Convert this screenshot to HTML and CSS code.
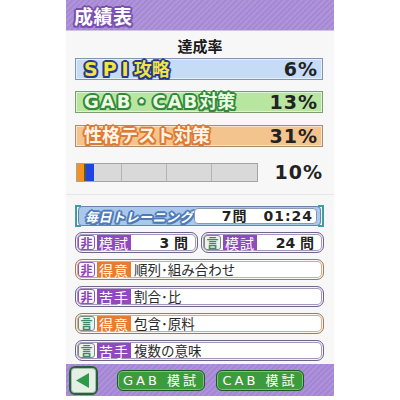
FILE: index.html
```html
<!DOCTYPE html>
<html lang="ja">
<head>
<meta charset="utf-8">
<title>成績表</title>
<link rel="stylesheet" href="styles.css">
</head>
<body>
<div class="screen">
  <header class="hdr"><span class="hdr-title ol">成績表</span></header>

  <section class="top">
    <div class="title">達成率</div>
    <div class="rate rate-spi">
      <span class="rate-name ol"><span class="latin latin-wide">SPI</span>攻略</span>
      <span class="pct">6%</span>
    </div>
    <div class="rate rate-gab">
      <span class="rate-name ol"><span class="latin">GAB・CAB</span>対策</span>
      <span class="pct">13%</span>
    </div>
    <div class="rate rate-sei">
      <span class="rate-name ol">性格テスト対策</span>
      <span class="pct">31%</span>
    </div>
    <div class="prog-row">
      <div class="prog">
        <div class="seg seg-first">
          <span class="f-or" style="width:7px"></span><span class="f-ol" style="width:2px"></span><span class="f-bl" style="width:8px"></span>
        </div>
        <div class="seg"></div>
        <div class="seg"></div>
        <div class="seg"></div>
      </div>
      <span class="prog-pct">10%</span>
    </div>
  </section>

  <section class="lower">
    <div class="daily">
      <div class="daily-in">
        <span class="daily-label ol">毎日トレーニング</span>
        <span class="daily-val"><span class="dv-q">7問</span><span class="dv-t">01:24</span></span>
      </div>
    </div>

    <div class="mock-row">
      <div class="pill pill-purple">
        <span class="badge badge-hi">非</span><span class="tag tag-purple">模試</span><span class="num">3 問</span>
      </div>
      <div class="pill pill-purple">
        <span class="badge badge-gen">言</span><span class="tag tag-purple">模試</span><span class="num">24 問</span>
      </div>
    </div>

    <div class="pill pill-orange">
      <span class="badge badge-hi">非</span><span class="tag tag-orange">得意</span><span class="val">順列･組み合わせ</span>
    </div>
    <div class="pill pill-purple">
      <span class="badge badge-hi">非</span><span class="tag tag-purple">苦手</span><span class="val">割合･比</span>
    </div>
    <div class="pill pill-orange">
      <span class="badge badge-gen">言</span><span class="tag tag-orange">得意</span><span class="val">包含･原料</span>
    </div>
    <div class="pill pill-purple">
      <span class="badge badge-gen">言</span><span class="tag tag-purple">苦手</span><span class="val">複数の意味</span>
    </div>
  </section>

  <footer class="bar">
    <div class="back">
      <svg width="15" height="17" viewBox="0 0 15 17"><path d="M14 1 L1 8.5 L14 16 Z" fill="#2f9a4c"/></svg>
    </div>
    <div class="btn">GAB 模試</div>
    <div class="btn">CAB 模試</div>
  </footer>
</div>
</body>
</html>
```

FILE: styles.css
```css
html, body {
  margin: 0;
  padding: 0;
  background: #ffffff;
}

body {
  font-family: "Noto Sans CJK JP", "Noto Sans", sans-serif;
  color: #222;
}

.screen {
  width: 268px;
  height: 396px;
  margin-left: 66px;
  background: #f7f7f7;
  display: flex;
  flex-direction: column;
  overflow: hidden;
}

.ol {
  text-shadow:
    -2px 0 var(--oc), 2px 0 var(--oc), 0 -2px var(--oc), 0 2px var(--oc),
    -1.5px -1.5px var(--oc), 1.5px -1.5px var(--oc), -1.5px 1.5px var(--oc), 1.5px 1.5px var(--oc);
}

/* header */
.hdr {
  height: 31px;
  box-sizing: border-box;
  background: repeating-linear-gradient(135deg, #a689d4 0 2px, #af94da 2px 4px);
  border-bottom: 1px solid #cfc6d8;
  display: flex;
  align-items: center;
  padding-left: 8px;
}
.hdr-title {
  --oc: #7a4fb0;
  color: #ffffff;
  font-size: 19px;
  font-weight: 700;
  letter-spacing: 0.5px;
  line-height: 1;
}

/* top */
.top {
  display: flex;
  flex-direction: column;
  padding: 0 11px 0 9px;
}
.title {
  margin-top: 5px;
  height: 20px;
  line-height: 20px;
  text-align: center;
  font-size: 15px;
  font-weight: 700;
  color: #1a1a1a;
  padding-left: 2px;
}
.rate {
  height: 22px;
  box-sizing: border-box;
  border: 1px solid;
  display: flex;
  align-items: center;
  justify-content: space-between;
  padding: 0 4px 0 8px;
  margin-top: 11px;
}
.rate-spi {
  margin-top: 2px;
  background: #c6dcf6;
  border-color: #8494aa;
  box-shadow: inset 0 0 0 1px #e4eefa;
}
.rate-gab {
  background: #b8e6a0;
  border-color: #7e9c72;
  box-shadow: inset 0 0 0 1px #dcf4d0;
}
.rate-sei {
  margin-top: 12px;
  background: #f4c48e;
  border-color: #a88c74;
  box-shadow: inset 0 0 0 1px #fae2c8;
}
.rate-name {
  font-family: "DejaVu Sans", "Noto Sans CJK JP", sans-serif;
  font-size: 18px;
  font-weight: 700;
  line-height: 1;
}
.rate-name .latin {
  letter-spacing: 2px;
}
.rate-name .latin-wide {
  letter-spacing: 5px;
  font-size: 19px;
}
.rate-spi .rate-name { --oc: #233a8c; color: #f2e442; }
.rate-gab .rate-name { --oc: #33893a; color: #ecfce2; }
.rate-sei .rate-name { --oc: #df7a32; color: #fff4e6; }

.pct {
  font-family: "DejaVu Sans", sans-serif;
  font-size: 19px;
  font-weight: 700;
  color: #222;
  letter-spacing: 1px;
  line-height: 1;
}

.prog-row {
  margin-top: 15px;
  height: 20px;
  display: flex;
  align-items: center;
  padding-left: 1px;
}
.prog {
  width: 183px;
  height: 19px;
  box-sizing: border-box;
  border: 1px solid #a4a4a4;
  background: #d9d9d9;
  display: flex;
}
.seg {
  flex: 1;
  border-left: 1px solid #b4b4b4;
  display: flex;
}
.seg-first { border-left: 0; }
.f-or { background: #f29222; }
.f-ol { background: #5a5a2a; }
.f-bl { background: #2143e0; }
.prog-pct {
  margin-left: 17px;
  font-family: "DejaVu Sans", sans-serif;
  font-size: 19px;
  font-weight: 700;
  letter-spacing: 1px;
  color: #222;
  line-height: 1;
}

/* lower */
.lower {
  margin-top: 12px;
  border-top: 1px solid #e6e6e6;
  padding: 11px 10px 0 9px;
  display: flex;
  flex-direction: column;
  gap: 6px;
}

.daily {
  position: relative;
  height: 20px;
  padding: 0 3px;
}
.daily::before,
.daily::after {
  content: "";
  position: absolute;
  top: -1px;
  bottom: -1px;
  width: 4px;
  border: 2px solid #3f9ea0;
}
.daily::before { left: 0; border-right: 0; }
.daily::after { right: 0; border-left: 0; }
.daily-in {
  height: 20px;
  box-sizing: border-box;
  background: #a9c8ec;
  border: 1px solid #6584ae;
  border-radius: 4px;
  display: flex;
  align-items: center;
  padding: 1px 3px 1px 6px;
}
.daily-label {
  --oc: #4d7bb8;
  color: #ffffff;
  font-size: 13px;
  font-weight: 700;
  font-style: italic;
  letter-spacing: 0.5px;
  line-height: 1;
  flex: 1;
}
.daily-val {
  width: 123px;
  height: 16px;
  box-sizing: border-box;
  background: #fff;
  border: 1px solid #8a9ab2;
  border-radius: 4px;
  display: flex;
  align-items: center;
  justify-content: flex-end;
  gap: 16px;
  padding-right: 3px;
  font-family: "DejaVu Sans", "Noto Sans CJK JP", sans-serif;
  font-weight: 700;
  font-size: 14px;
  color: #222;
  line-height: 1;
}
.dv-q { letter-spacing: 1px; }
.dv-t { letter-spacing: 1px; }

.mock-row {
  display: flex;
  gap: 3px;
}
.mock-row .pill { flex: 1; }

.pill {
  height: 21px;
  box-sizing: border-box;
  border: 1.5px solid;
  border-radius: 7px;
  background: #fff;
  display: flex;
  align-items: center;
  gap: 2px;
  padding: 1px 3px 1px 2px;
}
.pill-purple {
  border-color: #6f6589;
  box-shadow: inset 0 0 0 1px #f6f4fa, inset 0 0 0 2px #a398ba;
}
.pill-orange {
  border-color: #a07a5c;
  box-shadow: inset 0 0 0 1px #fbf6f0, inset 0 0 0 2px #d4ac86;
}

.badge {
  width: 17px;
  height: 15px;
  box-sizing: border-box;
  border: 1.5px solid;
  border-radius: 3px;
  display: flex;
  align-items: center;
  justify-content: center;
  font-size: 12px;
  font-weight: 700;
  line-height: 1;
  flex: none;
}
.badge-hi {
  border-color: #8f55b8;
  color: #8a44b4;
  background: #fbf8fd;
}
.badge-gen {
  border-color: #7c8a80;
  color: #3b8a6c;
  background: #eef2ee;
}
.tag {
  width: 34px;
  height: 15px;
  display: flex;
  align-items: center;
  justify-content: center;
  color: #fff;
  font-size: 14px;
  line-height: 1;
  letter-spacing: 1px;
  flex: none;
}
.tag-purple { background: #9249c0; }
.tag-orange { background: #ea7a2e; }

.num {
  flex: 1;
  height: 15px;
  background: #fff;
  border-radius: 0 5px 5px 0;
  display: flex;
  align-items: center;
  justify-content: flex-end;
  padding-right: 6px;
  font-family: "DejaVu Sans", "Noto Sans CJK JP", sans-serif;
  font-size: 14px;
  font-weight: 700;
  color: #222;
  line-height: 1;
}
.val {
  flex: 1;
  font-size: 13.5px;
  color: #2a2a2a;
  line-height: 1;
  padding-left: 1px;
}

/* bottom bar */
.bar {
  margin-top: 3px;
  height: 32px;
  background: repeating-linear-gradient(135deg, #a487d4 0 2px, #ad92d9 2px 4px);
  display: flex;
  align-items: center;
  padding-left: 3px;
}
.back {
  width: 29px;
  height: 29px;
  box-sizing: border-box;
  border: 2.5px solid #2d5d3e;
  border-radius: 6px;
  background: #e6efe6;
  box-shadow: inset 0 0 0 1px #9ec4a8;
  display: flex;
  align-items: center;
  justify-content: center;
  padding-right: 2px;
}
.btn {
  width: 88px;
  height: 21px;
  box-sizing: border-box;
  border: 1.5px solid #1d5a22;
  border-radius: 6px;
  background: #3c9c3c;
  box-shadow: inset 0 0 0 1px #7cc47c;
  color: #fff;
  font-family: "DejaVu Sans", "Noto Sans CJK JP", sans-serif;
  font-size: 13px;
  letter-spacing: 3px;
  display: flex;
  align-items: center;
  justify-content: center;
  line-height: 1;
  margin-left: 19px;
}
.btn + .btn { margin-left: 11px; }
```
